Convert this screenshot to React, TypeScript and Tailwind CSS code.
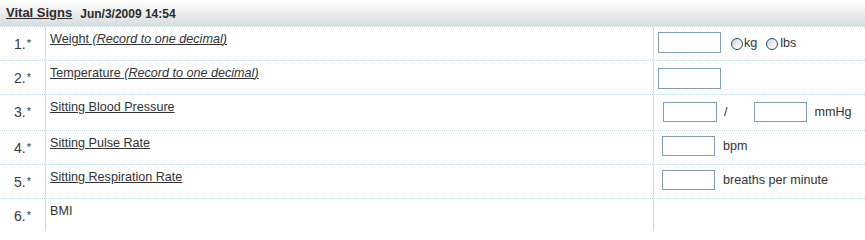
import React from 'react';

const font = 'font-["Liberation_Sans",Arial,sans-serif]';

const Radio = () => (
  <span className="inline-block shrink-0 w-[12px] h-[12px] rounded-full border border-[#1c5180] bg-gradient-to-br from-[#d4d4ce] via-[#eeeeea] to-white"></span>
);

const Num = ({ n }: { n: number }) => (
  <div className="w-[46px] shrink-0 border-r border-[#c9dbe6] flex justify-end pr-[14px] pt-[7px] text-[14px] text-[#3a3a3a]">
    <span>
      {n}.<sup className="text-[11px] relative -top-[2px] ml-[1px]">*</sup>
    </span>
  </div>
);

const Row = ({
  n,
  label,
  hint,
  link = true,
  h = 'h-[34px]',
  last = false,
  children,
}: {
  n: number;
  label: string;
  hint?: string;
  link?: boolean;
  h?: string;
  last?: boolean;
  children?: React.ReactNode;
}) => (
  <div className={`flex ${h} ${last ? '' : 'border-b border-dotted border-[#bcd3e0]'}`}>
    <Num n={n} />
    <div className="w-[608px] shrink-0 border-r border-[#c9dbe6] pl-[4px] pt-[3px] text-[12.6px] text-[#333]">
      {link ? (
        <span className="underline">
          {label}
          {hint && <i> ({hint})</i>}
        </span>
      ) : (
        <span>{label}</span>
      )}
    </div>
    <div className="flex-1">{children}</div>
  </div>
);

export default function App() {
  return (
    <div className={`w-[865px] h-[231px] bg-white overflow-hidden ${font} text-[#333]`}>
      {/* Header */}
      <div className="h-[27px] flex items-center pl-[6px] gap-[8px] bg-gradient-to-b from-white to-[#d8dcdc] border-b border-dotted border-[#bcd3e0]">
        <span className="text-[13px] font-bold underline text-[#2b2b2b]">Vital Signs</span>
        <span className="text-[12px] font-bold text-[#2b2b2b] pt-[1px]">Jun/3/2009 14:54</span>
      </div>

      <Row n={1} label="Weight" hint="Record to one decimal">
        <div className="flex items-end pl-[4px] pt-[5px] text-[12.6px]">
          <input className="w-[63px] h-[21px] border border-[#7f9db9] bg-white outline-none" />
          <div className="flex items-center ml-[10px]">
            <Radio />
            <span className="ml-[1px]">kg</span>
            <span className="ml-[9px] flex"><Radio /></span>
            <span className="ml-[2px]">lbs</span>
          </div>
        </div>
      </Row>

      <Row n={2} label="Temperature" hint="Record to one decimal">
        <div className="pl-[4px] pt-[5px]">
          <input className="w-[63px] h-[21px] border border-[#7f9db9] bg-white outline-none" />
        </div>
      </Row>

      <Row n={3} label="Sitting Blood Pressure" h="h-[36px]">
        <div className="flex items-center pl-[9px] pt-[7px] text-[12.6px]">
          <input className="w-[54px] h-[20px] border border-[#7f9db9] bg-white outline-none" />
          <span className="ml-[7px]">/</span>
          <input className="ml-[26px] w-[53px] h-[20px] border border-[#7f9db9] bg-white outline-none" />
          <span className="ml-[8px]">mmHg</span>
        </div>
      </Row>

      <Row n={4} label="Sitting Pulse Rate">
        <div className="flex items-center pl-[8px] pt-[5px] text-[12.6px]">
          <input className="w-[53px] h-[20px] border border-[#7f9db9] bg-white outline-none" />
          <span className="ml-[8px]">bpm</span>
        </div>
      </Row>

      <Row n={5} label="Sitting Respiration Rate">
        <div className="flex items-center pl-[8px] pt-[5px] text-[12.6px]">
          <input className="w-[53px] h-[20px] border border-[#7f9db9] bg-white outline-none" />
          <span className="ml-[8px]">breaths per minute</span>
        </div>
      </Row>

      <Row n={6} label="BMI" link={false} h="h-[32px]" last />
    </div>
  );
}
